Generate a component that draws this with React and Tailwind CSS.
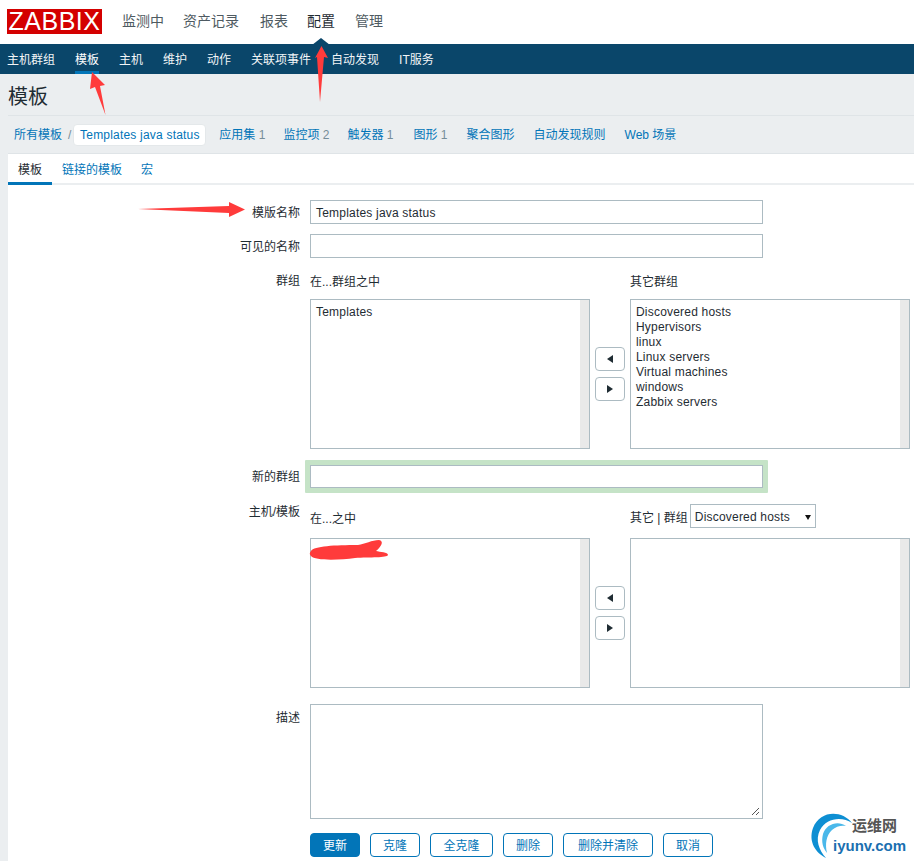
const font = { fontFamily: '"Liberation Sans", "Noto Sans CJK SC", sans-serif' };

const Input = ({ value = "", cls = "" }) => (
  <div className={`w-[453px] h-6 border border-[#acbbc2] bg-white px-[5px] text-xs leading-[24px] tracking-[0.2px] text-[#1f2c33] ${cls}`}>{value}</div>
);

const ListBox = ({ items = [], w = "w-[280px]" }) => (
  <div className={`${w} h-[150px] border border-[#acbbc2] bg-white flex`}>
    <div className="flex-1 px-[5px] pt-[5px] text-xs leading-[15px] tracking-[0.2px] text-[#1f2c33]">
      {items.map((t) => <div key={t}>{t}</div>)}
    </div>
    <div className="w-[9px] h-full bg-[#e9e9e9]" />
  </div>
);

const Tri = ({ dir }) => (
  <svg width="6" height="8" viewBox="0 0 6 8">
    <path d={dir === "l" ? "M6 0V8L0 4Z" : "M0 0V8L6 4Z"} fill="#1f2c33" />
  </svg>
);

const MoveButtons = () => (
  <div className="w-[40px] flex flex-col items-center gap-1.5">
    {["l", "r"].map((d) => (
      <div key={d} className="w-[30px] h-6 border border-[#acbbc2] rounded-sm bg-white flex items-center justify-center"><Tri dir={d} /></div>
    ))}
  </div>
);

const Row = ({ label, children, cls = "", labelCls = "" }) => (
  <div className={`flex ${cls}`}>
    <div className={`w-[292px] shrink-0 text-right text-xs text-[#1f2c33] ${labelCls}`}>{label}</div>
    <div className="ml-[10px]">{children}</div>
  </div>
);

const Crumb = ({ t, n, ml }) => (
  <span className={`${ml} text-xs text-[#0275b8] whitespace-nowrap`}>
    {t}{n && <span className="text-[#768d99]"> {n}</span>}
  </span>
);

const Btn = ({ t, w, primary }) => (
  <div className={`${w} h-6 rounded-sm border border-[#0275b8] text-xs leading-6 text-center ${primary ? "bg-[#0275b8] text-white" : "bg-white text-[#0275b8]"}`}>{t}</div>
);

export default function App() {
  return (
    <div style={font} className="relative w-[914px] h-[861px] overflow-hidden bg-[#ebeef0]">
      <header className="h-[44px] bg-white flex items-center text-sm text-[#4e5a61]">
        <div className="ml-[7px] mt-[-1px] w-[95px] h-[25px] bg-[#d40000] text-white text-[25px] leading-[25px] text-center tracking-[0.5px]">ZABBIX</div>
        <nav className="ml-5 flex gap-[20px] mt-[-2px]">
          <span>监测中</span>
          <span className="ml-[-1px]">资产记录</span>
          <span className="ml-[1px]">报表</span>
          <span className="text-[#1f2c33] ml-[-1px]">配置</span>
          <span>管理</span>
        </nav>
      </header>

      <nav className="relative h-[30px] bg-[#0a466a] flex gap-5 pl-[7px] text-xs leading-[32px] text-[#f2f5f7]">
        <span>主机群组</span>
        <span className="h-[30px] border-b-[3px] border-[#0275b8] text-white">模板</span>
        <span>主机</span>
        <span>维护</span>
        <span>动作</span>
        <span>关联项事件</span>
        <span>自动发现</span>
        <span>IT服务</span>
      </nav>

      <div className="ml-2">
        <h1 className="h-[42px] border-b border-[#dfe4e7] text-xl leading-[46px] font-normal text-[#1f2c33]">模板</h1>

        <div className="h-[38px] flex items-center border-b border-[#dfe4e7] pl-1.5 pt-[1px]">
          <Crumb t="所有模板" />
          <span className="ml-[6px] text-xs text-[#768d99]">/</span>
          <span className="ml-[2px] w-[133px] h-[22px] bg-white border border-[#e4e8ea] rounded-sm text-xs leading-5 tracking-[0.2px] text-center text-[#0275b8]">Templates java status</span>
          <Crumb t="应用集" n="1" ml="ml-[13px]" />
          <Crumb t="监控项" n="2" ml="ml-[18px]" />
          <Crumb t="触发器" n="1" ml="ml-[18px]" />
          <Crumb t="图形" n="1" ml="ml-[20px]" />
          <Crumb t="聚合图形" ml="ml-[19px]" />
          <Crumb t="自动发现规则" ml="ml-[19px]" />
          <Crumb t="Web 场景" ml="ml-[19px]" />
        </div>

        <main className="bg-white h-[708px]">
          <div className="h-[31px] flex border-b-2 border-[#ebeef0] text-xs text-[#0275b8]">
            <span className="h-[31px] w-[44px] border-b-[3px] border-[#0275b8] text-center leading-[32px] text-[#1f2c33]">模板</span>
            <span className="ml-[10px] leading-[32px]">链接的模板</span>
            <span className="ml-[19px] leading-[32px]">宏</span>
          </div>

          <div className="pt-[15px]">
            <Row label="模版名称" labelCls="h-6 leading-[26px]"><Input value="Templates java status" /></Row>
            <Row label="可见的名称" cls="mt-[10px]" labelCls="h-6 leading-[26px]"><Input /></Row>

            <Row label="群组" cls="mt-[15px]" labelCls="leading-[16px]">
              <div className="flex">
                <div className="w-[320px] h-[26px] text-xs leading-[18px] text-[#1f2c33]">在...群组之中</div>
                <div className="text-xs leading-[18px] text-[#1f2c33]">其它群组</div>
              </div>
              <div className="flex items-center">
                <ListBox items={["Templates"]} />
                <MoveButtons />
                <ListBox items={["Discovered hosts", "Hypervisors", "linux", "Linux servers", "Virtual machines", "windows", "Zabbix servers"]} />
              </div>
            </Row>

            <Row label="新的群组" cls="mt-[11px]" labelCls="h-[33px] leading-[34px]">
              <div className="ml-[-5px] w-[463px] h-[33px] p-[5px] bg-[#c5e3c7] rounded-[1px]"><Input cls="h-[23px]" /></div>
            </Row>

            <Row label="主机/模板" cls="mt-[11px]" labelCls="leading-[16px]">
              <div className="flex items-center h-[24px] mb-[10px]">
                <div className="w-[320px] pt-[6px] text-xs text-[#1f2c33]">在...之中</div>
                <div className="pt-[4px] text-xs text-[#1f2c33]">其它 | 群组</div>
                <div className="ml-[2px] w-[126px] h-6 border border-[#acbbc2] pl-1 pt-[2px] flex items-center justify-between text-xs tracking-[0.2px] text-[#1f2c33]">
                  Discovered hosts
                  <svg width="6" height="5" viewBox="0 0 6 5" className="mr-[4px]"><path d="M0 0H6L3 5Z" fill="#111" /></svg>
                </div>
              </div>
              <div className="flex items-center">
                <ListBox />
                <MoveButtons />
                <ListBox />
              </div>
            </Row>

            <Row label="描述" cls="mt-4" labelCls="leading-[28px]">
              <div className="relative w-[453px] h-[115px] border border-[#acbbc2] bg-white">
                <svg width="9" height="9" viewBox="0 0 9 9" className="absolute right-0.5 bottom-0.5"><path d="M1 8L8 1M5 8L8 5" stroke="#555" strokeWidth="1" /></svg>
              </div>
            </Row>

            <div className="mt-[14px] ml-[302px] flex gap-[10px]">
              <Btn t="更新" w="w-[50px]" primary />
              <Btn t="克隆" w="w-[50px]" />
              <Btn t="全克隆" w="w-[63px]" />
              <Btn t="删除" w="w-[50px]" />
              <Btn t="删除并清除" w="w-[90px]" />
              <Btn t="取消" w="w-[50px]" />
            </div>
          </div>
        </main>
      </div>

      {/* Annotations drawn over the screenshot */}
      <svg className="absolute inset-0 pointer-events-none" width="914" height="861" viewBox="0 0 914 861">
        <path d="M321 38L312 45H330Z" fill="#0a466a" />
        <path d="M321.5 46L328 58L324 57L320 102L317 57L315 58Z" fill="#ff3b3b" />
        <path d="M92 72L105 85L100 86L105.5 115L95 87L90 89Z" fill="#ff3b3b" />
        <path d="M245 209.5L229 202L229 206L138 209L229 213L229 217Z" fill="#ff3b3b" />
        <path d="M311 551C314 546 335 545 358 545C365 544 372 540 379 540C384 541 382 546 376 551C380 552 388 552 388 555C387 558 370 557 355 558C340 560 315 561 311 556C309 554 310 552 311 551Z" fill="#ff3b3b" />
        <path d="M852 823C842 810 820 810 813 828C808 842 816 853 826 858C819 850 815 840 820 830C826 818 842 816 852 823Z" fill="#0e8fd3" />
        <path d="M846 826C838 820 826 824 823 834C821 842 823 848 827 853C825 844 826 836 832 830C836 826 842 825 846 826Z" fill="#4ab8ea" />
      </svg>
      <div className="absolute left-[852px] top-[816px] text-[15px] font-bold leading-5 text-[#555]">运维网</div>
      <div className="absolute left-[833px] top-[836px] text-[15px] font-bold leading-5 text-[#1a6fb0]">iyunv.com</div>
    </div>
  );
}
